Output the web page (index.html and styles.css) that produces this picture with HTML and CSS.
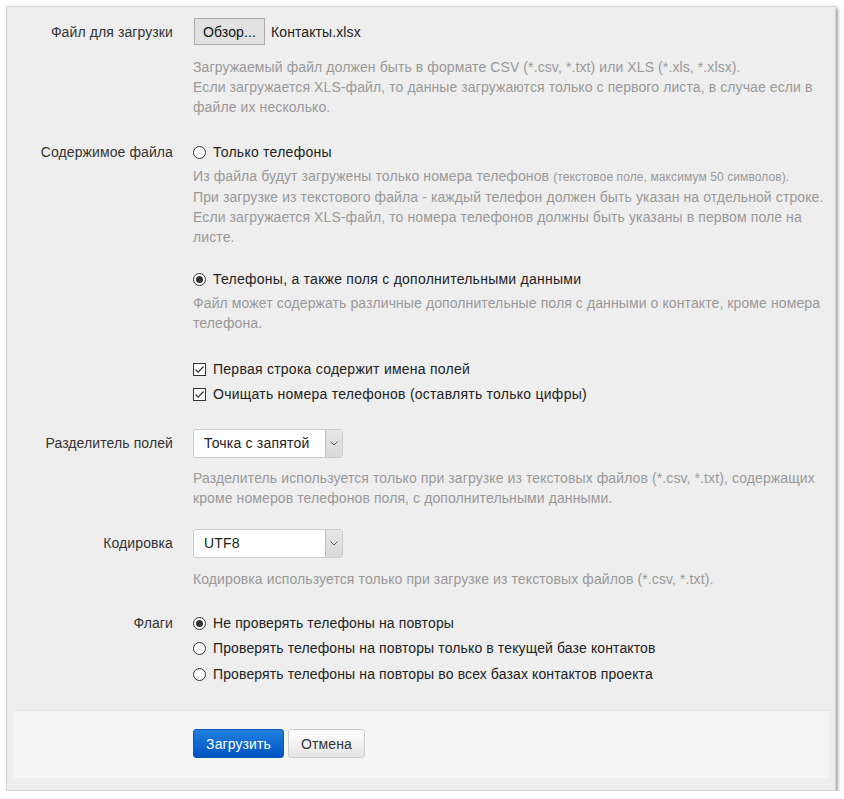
FILE: index.html
```html
<!DOCTYPE html>
<html lang="ru">
<head>
<meta charset="utf-8">
<title>Загрузка контактов</title>
<link rel="stylesheet" href="styles.css">
</head>
<body>
<form class="panel">
  <div class="row row-file">
    <div class="label label-file">Файл для загрузки</div>
    <div class="ctrl">
      <div class="file-line">
        <span class="file-btn">Обзор...</span>
        <span class="file-name">Контакты.xlsx</span>
      </div>
      <div class="help help-file">Загружаемый файл должен быть в формате CSV (*.csv, *.txt) или XLS (*.xls, *.xlsx).<br>Если загружается XLS-файл, то данные загружаются только с первого листа, в случае если в файле их несколько.</div>
    </div>
  </div>

  <div class="row row-content">
    <div class="label">Содержимое файла</div>
    <div class="ctrl">
      <div class="opt"><span class="radio"></span>Только телефоны</div>
      <div class="help help-opt">Из файла будут загружены только номера телефонов <small>(текстовое поле, максимум 50 символов).</small><br>При загрузке из текстового файла - каждый телефон должен быть указан на отдельной строке.<br>Если загружается XLS-файл, то номера телефонов должны быть указаны в первом поле на листе.</div>
      <div class="opt opt-second"><span class="radio checked"></span>Телефоны, а также поля с дополнительными данными</div>
      <div class="help help-opt">Файл может содержать различные дополнительные поля с данными о контакте, кроме номера телефона.</div>
      <div class="opt opt-check1"><span class="check"><svg width="11" height="11" viewBox="0 0 11 11"><polyline points="1.5,5.5 4.2,8.2 9.5,2.5" fill="none" stroke="#333" stroke-width="1.2"/></svg></span>Первая строка содержит имена полей</div>
      <div class="opt opt-check2"><span class="check"><svg width="11" height="11" viewBox="0 0 11 11"><polyline points="1.5,5.5 4.2,8.2 9.5,2.5" fill="none" stroke="#333" stroke-width="1.2"/></svg></span>Очищать номера телефонов (оставлять только цифры)</div>
    </div>
  </div>

  <div class="row row-sep">
    <div class="label label-select">Разделитель полей</div>
    <div class="ctrl">
      <div class="select"><span class="select-text">Точка с запятой</span><span class="select-arrow"><svg width="8" height="5" viewBox="0 0 8 5"><polyline points="0.5,0.5 4,4 7.5,0.5" fill="none" stroke="#555" stroke-width="1"/></svg></span></div>
      <div class="help help-select">Разделитель используется только при загрузке из текстовых файлов (*.csv, *.txt), содержащих кроме номеров телефонов поля, с дополнительными данными.</div>
    </div>
  </div>

  <div class="row row-enc">
    <div class="label label-select">Кодировка</div>
    <div class="ctrl">
      <div class="select"><span class="select-text">UTF8</span><span class="select-arrow"><svg width="8" height="5" viewBox="0 0 8 5"><polyline points="0.5,0.5 4,4 7.5,0.5" fill="none" stroke="#555" stroke-width="1"/></svg></span></div>
      <div class="help help-select help-enc">Кодировка используется только при загрузке из текстовых файлов (*.csv, *.txt).</div>
    </div>
  </div>

  <div class="row row-flags">
    <div class="label">Флаги</div>
    <div class="ctrl">
      <div class="opt opt-flag1"><span class="radio checked"></span>Не проверять телефоны на повторы</div>
      <div class="opt opt-flag"><span class="radio"></span>Проверять телефоны на повторы только в текущей базе контактов</div>
      <div class="opt opt-flag2"><span class="radio"></span>Проверять телефоны на повторы во всех базах контактов проекта</div>
    </div>
  </div>

  <div class="footer">
    <span class="btn btn-primary">Загрузить</span>
    <span class="btn btn-default">Отмена</span>
  </div>
</form>
</body>
</html>
```

FILE: styles.css
```css
html, body {
  margin: 0;
  padding: 0;
  background: #ffffff;
}

body {
  font-family: "Liberation Sans", Arial, sans-serif;
  font-size: 14px;
  line-height: 20px;
  color: #333333;
  letter-spacing: 0.1px;
}

.panel {
  margin: 6px 0 0 6px;
  width: 816px;
  padding: 11px 6px 12px 6px;
  background: #eeeeee;
  border: 1px solid #d4d4d4;
  box-shadow: 2px 2px 3px rgba(0, 0, 0, 0.35);
}

.row {
  display: grid;
  grid-template-columns: 160px 636px;
  column-gap: 20px;
}

.label {
  text-align: right;
  color: #333333;
  line-height: 20px;
  letter-spacing: 0.1px;
}

.label-file {
  padding-top: 4px;
}

.label-select {
  line-height: 29px;
}

.ctrl {
  display: flex;
  flex-direction: column;
  align-items: flex-start;
}

.file-line {
  display: flex;
  align-items: center;
  height: 27px;
  margin-left: 1px;
}

.file-btn {
  box-sizing: border-box;
  height: 27px;
  width: 71px;
  display: flex;
  align-items: center;
  justify-content: center;
  background: #e1e1e1;
  border: 1px solid #adadad;
  color: #111111;
}

.file-name {
  margin-left: 6px;
  color: #222222;
}

.help {
  color: #999999;
}

.help small {
  font-size: 12px;
}

.help-file {
  margin-top: 12px;
}

.row-content {
  margin-top: 25px;
}

.opt {
  display: flex;
  align-items: center;
  height: 20px;
  color: #222222;
  white-space: nowrap;
  letter-spacing: 0.25px;
}

.help-opt {
  margin-top: 4px;
}

.opt-second {
  margin-top: 22px;
}

.opt-check1 {
  margin-top: 26px;
}

.opt-check2 {
  margin-top: 5px;
}

.radio {
  box-sizing: border-box;
  width: 13px;
  height: 13px;
  margin-right: 7px;
  border: 1px solid #333333;
  border-radius: 50%;
  background: #ffffff;
  display: flex;
  align-items: center;
  justify-content: center;
  flex: none;
}

.radio.checked::after {
  content: "";
  width: 7px;
  height: 7px;
  border-radius: 50%;
  background: #333333;
}

.check {
  box-sizing: border-box;
  width: 13px;
  height: 13px;
  margin-right: 7px;
  border: 1px solid #333333;
  background: #ffffff;
  display: flex;
  align-items: center;
  justify-content: center;
  flex: none;
}

.check svg {
  display: block;
}

.row-sep {
  margin-top: 25px;
}

.select {
  box-sizing: border-box;
  width: 150px;
  height: 29px;
  display: flex;
  background: #ffffff;
  border: 1px solid #cccccc;
  border-radius: 3px;
  overflow: hidden;
}

.select-text {
  flex: 1;
  padding-left: 10px;
  line-height: 27px;
  color: #222222;
  letter-spacing: 0.2px;
}

.select-arrow {
  width: 16px;
  display: flex;
  align-items: center;
  justify-content: center;
  background: linear-gradient(#e6e6e6, #d9d9d9);
  border-left: 1px solid #bbbbbb;
}

.select-arrow svg {
  display: block;
}

.help-select {
  margin-top: 10px;
}

.help-enc {
  margin-top: 11px;
}

.row-enc {
  margin-top: 21px;
}

.row-flags {
  margin-top: 24px;
}

.row-flags .opt {
  letter-spacing: 0.12px;
}

.opt-flag {
  margin-top: 5px;
}

.opt-flag2 {
  margin-top: 6px;
}

.footer {
  margin-top: 26px;
  border-top: 1px solid #e3e3e3;
  background: #f5f5f5;
  padding: 18px 0 20px 180px;
  display: flex;
  gap: 4px;
}

.btn {
  box-sizing: border-box;
  height: 29px;
  display: flex;
  align-items: center;
  justify-content: center;
  border-radius: 3px;
  padding: 0 12px;
}

.btn-primary {
  width: 91px;
  color: #ffffff;
  background: linear-gradient(#1f80dc, #0053c4);
  border: 1px solid #0a55b8;
}

.btn-default {
  width: 77px;
  color: #333333;
  background: linear-gradient(#ffffff, #e4e4e4);
  border: 1px solid #cccccc;
}
```
